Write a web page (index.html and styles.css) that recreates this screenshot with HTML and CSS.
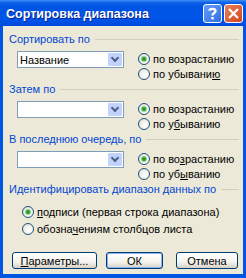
FILE: index.html
```html
<!DOCTYPE html>
<html lang="ru">
<head>
    <meta charset="UTF-8" />
    <title>Сортировка диапазона</title>
    <link rel="stylesheet" href="styles.css">
</head>
<body>

<div class="window">
    <div class="titlebar">
        <span class="title">Сортировка диапазона</span>
        <span class="tb-btn tb-help">
            <svg width="17" height="17" viewBox="0 0 17 17"><path d="M5.5 5.8 C5.5 3.2 11.5 3.2 11.5 6 C11.5 8.2 8.5 8 8.5 10.5" fill="none" stroke="#fff" stroke-width="2.4"/><rect x="7.3" y="12" width="2.4" height="2.4" fill="#fff"/></svg>
        </span>
        <span class="tb-btn tb-close">
            <svg width="17" height="17" viewBox="0 0 17 17"><path d="M4 4 L13 13 M13 4 L4 13" stroke="#fff" stroke-width="2.2"/></svg>
        </span>
    </div>

    <div class="client">
        <!-- Первый ключ -->
        <div class="group">
            <div class="group-head"><span>Сортировать по</span><i></i></div>
            <div class="group-row">
                <div class="combo"><span class="combo-text">Название</span><span class="combo-arrow"></span></div>
                <div class="radios">
                    <label class="radio"><span class="dot checked"></span><span>по возрастанию</span></label>
                    <label class="radio"><span class="dot"></span><span>по убывани<u>ю</u></span></label>
                </div>
            </div>
        </div>

        <!-- Второй ключ -->
        <div class="group">
            <div class="group-head"><span>Затем по</span><i></i></div>
            <div class="group-row">
                <div class="combo"><span class="combo-text"></span><span class="combo-arrow"></span></div>
                <div class="radios">
                    <label class="radio"><span class="dot checked"></span><span>по возрастанию</span></label>
                    <label class="radio"><span class="dot"></span><span>по у<u>б</u>ыванию</span></label>
                </div>
            </div>
        </div>

        <!-- Третий ключ -->
        <div class="group">
            <div class="group-head"><span>В последнюю очередь, по</span><i></i></div>
            <div class="group-row">
                <div class="combo"><span class="combo-text"></span><span class="combo-arrow"></span></div>
                <div class="radios">
                    <label class="radio"><span class="dot checked"></span><span>по во<u>з</u>растанию</span></label>
                    <label class="radio"><span class="dot"></span><span>по уб<u>ы</u>ванию</span></label>
                </div>
            </div>
        </div>

        <!-- Диапазон -->
        <div class="group group-last">
            <div class="group-head"><span>Идентифицировать диапазон данных по</span><i></i></div>
            <div class="ident">
                <label class="radio"><span class="dot checked"></span><span><u>п</u>одписи (первая строка диапазона)</span></label>
                <label class="radio"><span class="dot"></span><span>обозна<u>ч</u>ениям столбцов листа</span></label>
            </div>
        </div>

        <div class="buttons">
            <button class="btn btn-params"><u>П</u>араметры...</button>
            <button class="btn btn-ok">ОК</button>
            <button class="btn btn-cancel">Отмена</button>
        </div>
    </div>
</div>

</body>
</html>
```

FILE: styles.css
```css
body {
    margin: 0;
    padding: 0;
    font-family: 'Liberation Sans', Arial, sans-serif;
    font-size: 11px;
    color: #000;
}

.window {
    width: 246px;
    height: 278px;
    box-sizing: border-box;
    background: #0055e5;
    display: flex;
    flex-direction: column;
}

.titlebar {
    height: 26px;
    display: flex;
    align-items: center;
    padding: 0 3px 0 6px;
    gap: 2px;
    background: linear-gradient(to bottom, #3d8cf5 0, #0a5ee6 3px, #0054e3 7px, #0056ea 18px, #0049dc 26px);
}

.title {
    flex: 1;
    color: #fff;
    font-weight: bold;
    font-size: 12.5px;
    text-shadow: 1px 1px 0 #0a1e8c;
    margin-top: 1px;
}

.tb-btn {
    width: 19px;
    height: 19px;
    box-sizing: border-box;
    border: 1px solid #fff;
    border-radius: 3px;
    display: flex;
}

.tb-help {
    background: linear-gradient(135deg, #6a9cf8, #2f6fe8);
}

.tb-close {
    background: linear-gradient(135deg, #e6835a, #d6431c);
}

.client {
    flex: 1;
    margin: 0 3px 4px 3px;
    background: #ece9d8;
    padding: 7px 4px 0 6px;
}

.group {
    height: 50px;
}

.group-last {
    height: auto;
}

.group-head {
    display: flex;
    align-items: center;
    height: 12px;
    gap: 5px;
    color: #0046d5;
}

.group-head i {
    flex: 1;
    height: 1px;
    background: #d0d0bf;
}

.group-row {
    display: flex;
    margin: 6px 0 0 8px;
}

.combo {
    width: 107px;
    height: 17px;
    box-sizing: border-box;
    border: 1px solid #7f9db9;
    background: #fff;
    display: flex;
    align-items: center;
    padding: 1px;
}

.combo-text {
    flex: 1;
    padding-left: 1px;
}

.combo-arrow {
    width: 14px;
    height: 13px;
    background: #c1d3fb;
    border-radius: 1px;
    position: relative;
}

.combo-arrow::after {
    content: '';
    position: absolute;
    left: 4px;
    top: 2px;
    width: 4px;
    height: 4px;
    border-right: 2px solid #4d6185;
    border-bottom: 2px solid #4d6185;
    transform: rotate(45deg);
}

.radios {
    margin-left: 14px;
    display: flex;
    flex-direction: column;
}

.radio {
    display: flex;
    align-items: center;
    height: 15px;
    gap: 3px;
}

.dot {
    width: 12px;
    height: 12px;
    box-sizing: border-box;
    border: 1px solid #1c5180;
    border-radius: 50%;
    background: radial-gradient(circle at 65% 65%, #fff 0, #f5f4ea 40%, #dcdad0 100%);
    position: relative;
}

.dot.checked::after {
    content: '';
    position: absolute;
    left: 3px;
    top: 3px;
    width: 4px;
    height: 4px;
    border-radius: 50%;
    background: #21a121;
    box-shadow: 0 0 0 1px #8fd08f;
}

.ident {
    margin: 9px 0 0 13px;
    display: flex;
    flex-direction: column;
    gap: 2px;
}

.buttons {
    display: flex;
    margin: 16px 0 0 3px;
}

.btn {
    height: 17px;
    box-sizing: border-box;
    border: 1px solid #003c74;
    border-radius: 3px;
    background: linear-gradient(to bottom, #fff 0, #f4f3ee 60%, #d6d0c5 100%);
    font-family: 'Liberation Sans', Arial, sans-serif;
    font-size: 11px;
    padding: 0;
    color: #000;
}

.btn-params {
    width: 85px;
}

.btn-ok {
    width: 57px;
    margin-left: 9px;
    box-shadow: inset 0 0 0 1px #8ab5f5;
}

.btn-cancel {
    width: 62px;
    margin-left: 13px;
}
```
